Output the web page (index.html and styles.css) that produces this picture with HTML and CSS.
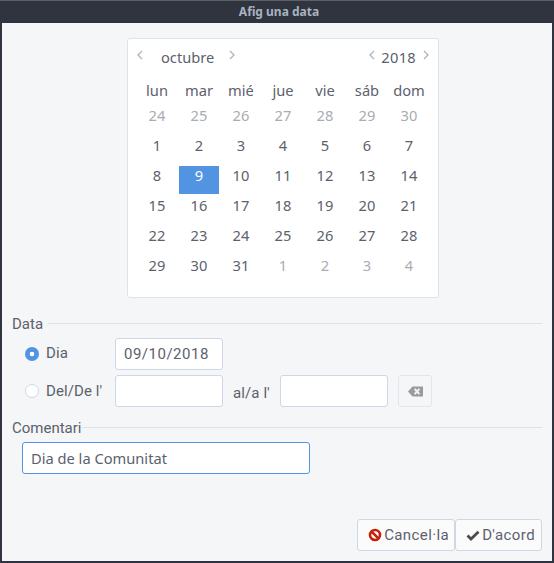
FILE: index.html
```html
<!DOCTYPE html>
<html lang="ca">
<head>
<meta charset="utf-8">
<title>Afig una data</title>
<link rel="stylesheet" href="styles.css">
</head>
<body>
<div class="window">
  <div class="titlebar">Afig una data</div>
  <div class="content">
    <div class="calendar">
      <div class="cal-head">
        <div class="cal-nav month">
          <svg class="chev" viewBox="0 0 8 10"><path d="M6 1 2 5l4 4"/></svg>
          <span class="month-name">octubre</span>
          <svg class="chev" viewBox="0 0 8 10"><path d="M2 1l4 4-4 4"/></svg>
        </div>
        <div class="cal-nav year">
          <svg class="chev" viewBox="0 0 8 10"><path d="M6 1 2 5l4 4"/></svg>
          <span class="year-name">2018</span>
          <svg class="chev" viewBox="0 0 8 10"><path d="M2 1l4 4-4 4"/></svg>
        </div>
      </div>
      <div class="cal-grid">
        <div class="dow">lun</div><div class="dow">mar</div><div class="dow">mié</div><div class="dow">jue</div><div class="dow">vie</div><div class="dow">sáb</div><div class="dow">dom</div>
        <div class="day off">24</div><div class="day off">25</div><div class="day off">26</div><div class="day off">27</div><div class="day off">28</div><div class="day off">29</div><div class="day off">30</div>
        <div class="day">1</div><div class="day">2</div><div class="day">3</div><div class="day">4</div><div class="day">5</div><div class="day">6</div><div class="day">7</div>
        <div class="day">8</div><div class="day selected">9</div><div class="day">10</div><div class="day">11</div><div class="day">12</div><div class="day">13</div><div class="day">14</div>
        <div class="day">15</div><div class="day">16</div><div class="day">17</div><div class="day">18</div><div class="day">19</div><div class="day">20</div><div class="day">21</div>
        <div class="day">22</div><div class="day">23</div><div class="day">24</div><div class="day">25</div><div class="day">26</div><div class="day">27</div><div class="day">28</div>
        <div class="day">29</div><div class="day">30</div><div class="day">31</div><div class="day off">1</div><div class="day off">2</div><div class="day off">3</div><div class="day off">4</div>
      </div>
    </div>

    <div class="section-title section-data"><span>Data</span><i class="rule"></i></div>
    <div class="date-rows">
      <div class="date-row row-single">
        <span class="radio checked"></span>
        <span class="label">Dia</span>
        <div class="input input-date">09/10/2018</div>
      </div>
      <div class="date-row row-range">
        <span class="radio"></span>
        <span class="label">Del/De l'</span>
        <div class="input input-date"></div>
        <span class="label label-to">al/a l'</span>
        <div class="input input-date"></div>
        <button class="clear-btn" type="button" aria-label="Esborra">
          <svg viewBox="0 0 15 11" width="15" height="11"><path class="bs" d="M0 5.5 4.5 0.5H15V10.5H4.5Z"/><path class="bx" d="M6.6 2.8 11.4 8.2M11.4 2.8 6.6 8.2"/></svg>
        </button>
      </div>
    </div>

    <div class="section-title section-comment"><span>Comentari</span><i class="rule"></i></div>
    <div class="input input-comment">Dia de la Comunitat</div>

    <div class="actions">
      <button class="btn" type="button">
        <svg viewBox="0 0 14 14" width="14" height="14"><circle cx="7" cy="7" r="5" fill="none" stroke="#c4210b" stroke-width="2.6"/><path d="M3.6 3.6 10.4 10.4" stroke="#c4210b" stroke-width="2.6"/></svg>
        Cancel·la
      </button>
      <button class="btn btn-ok" type="button">
        <svg viewBox="0 0 14 14" width="14" height="14"><path d="M1.5 7.5 5 11 12.5 3.8" fill="none" stroke="#4a4a4a" stroke-width="2.8"/></svg>
        D'acord
      </button>
    </div>
  </div>
</div>
</body>
</html>
```

FILE: styles.css
```css
* { box-sizing: border-box; }
html, body { margin: 0; padding: 0; }
body { width: 554px; height: 563px; overflow: hidden; background: #2f343f; }

.window {
  width: 554px;
  height: 563px;
  display: flex;
  flex-direction: column;
  border-top: 1px solid #5c5f67;
  background: #2f343f;
}
.titlebar {
  height: 22px;
  flex: none;
  padding-left: 4px;
  text-align: center;
  font: bold 12px/21px "Noto Sans", sans-serif;
  color: #a9b2c0;
}
.content {
  flex: 1;
  margin: 0 2px 2px 2px;
  background: #f5f6f7;
  display: flex;
  flex-direction: column;
  color: #5c616c;
}

.calendar {
  width: 312px;
  height: 260px;
  margin: 15px 0 0 125px;
  background: #fff;
  border: 1px solid #dfe3e8;
  border-radius: 3px;
  padding: 0 8px;
  font-family: "Noto Sans", sans-serif;
}
.cal-head {
  height: 36px;
  display: flex;
  justify-content: space-between;
  align-items: center;
}
.cal-nav { display: flex; align-items: center; }
.chev { width: 8px; height: 10px; margin-top: -5px; }
.chev path { fill: none; stroke: #b0b3b8; stroke-width: 1.3; }
.month-name { font-size: 14.67px; line-height: 20px; margin: 0 14px 0 17px; }
.year-name { font-size: 14.67px; line-height: 20px; margin: 0 6px 0 5px; letter-spacing: 0.3px; }

.cal-grid {
  display: grid;
  grid-template-columns: repeat(7, 42px);
  grid-template-rows: repeat(7, 30px);
}
.dow, .day {
  font-size: 14.67px;
  display: flex;
  align-items: center;
  justify-content: center;
}
.day { margin: 1px; padding-bottom: 11px; }
.day.off { color: #a9acb2; }
.day.selected { background: #5294e2; color: #fff; }

.section-title {
  display: flex;
  align-items: center;
  margin: 0 10px;
  font: 15px/18px Roboto, sans-serif;
  height: 18px;
}
.section-data { margin-top: 17px; }
.section-comment { margin-top: 12px; }
.rule { flex: 1; height: 1px; background: #dfe1e5; margin: -2px 0 0 5px; }
.section-comment .rule { margin: -1px 0 0 0; }

.date-rows { margin: 5px 0 0 23px; display: flex; flex-direction: column; gap: 5px; }
.date-row { display: flex; align-items: center; height: 32px; }
.radio {
  width: 14px;
  height: 14px;
  border-radius: 50%;
  border: 1px solid #cfd6e6;
  background: #fff;
  flex: none;
}
.radio.checked {
  border: 0;
  background: radial-gradient(circle, #fff 0 2px, #5294e2 2.6px);
}
.label {
  font: 15px/18px Roboto, sans-serif;
  letter-spacing: 0.1px;
  margin: -3px 0 0 7px;
  width: 69px;
  flex: none;
  height: 18px;
}
.row-range .label { margin-top: -1px; }
.row-range .label-to { width: 47px; margin: 4px 0 0 10px; }
.input {
  height: 32px;
  background: #fff;
  border: 1px solid #cfd6e6;
  border-radius: 3px;
}
.input-date {
  width: 108px;
  padding-left: 8px;
  font: 15px/31px Roboto, sans-serif;
  letter-spacing: 0.5px;
  flex: none;
}
.clear-btn {
  width: 34px;
  height: 32px;
  margin-left: 10px;
  padding: 0;
  background: #f5f6f7;
  border: 1px solid #e3e5eb;
  border-radius: 3px;
  display: flex;
  align-items: center;
  justify-content: center;
}
.bs { fill: #9b9b9b; }
.bx { stroke: #f3f3f3; stroke-width: 2; fill: none; }

.input-comment {
  width: 288px;
  margin: 5px 0 0 20px;
  border-color: #5294e2;
  padding-left: 8px;
  font: 14.67px/30px "Noto Sans", sans-serif;
}

.actions {
  margin-top: auto;
  padding: 0 10px 10px 0;
  display: flex;
  justify-content: flex-end;
}
.btn {
  height: 32px;
  padding: 0 5px 0 10px;
  background: #fbfbfc;
  border: 1px solid #cfd6e6;
  border-radius: 3px;
  font: 15px Roboto, sans-serif;
  letter-spacing: 0.4px;
  color: #5c616c;
  display: flex;
  align-items: center;
  gap: 2px;
}
.btn-ok { padding-right: 6px; }
```
